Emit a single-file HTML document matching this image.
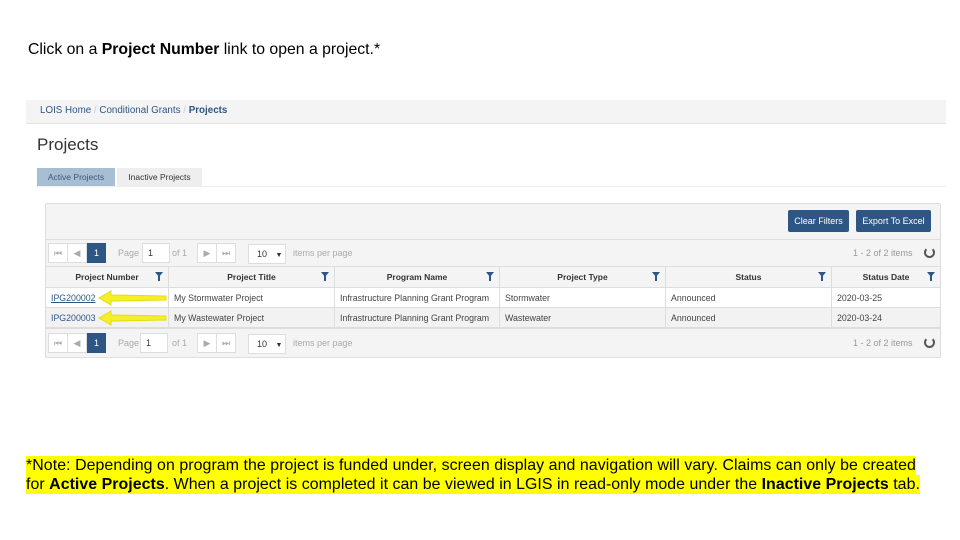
<!DOCTYPE html>
<html><head><meta charset="utf-8"><style>
*{margin:0;padding:0;box-sizing:border-box}
body{width:960px;height:540px;background:#fff;font-family:"Liberation Sans",Arial,sans-serif;position:relative;overflow:hidden}
.a{position:absolute}
.s{font-size:9px;color:#333}
.btn{background:#2d5685;color:#fff;font-size:9px;text-align:center;line-height:22px;border-radius:2px}
.pg{position:absolute;height:20px;border:1px solid #ddd;background:#fff;font-size:9px;color:#aaa;line-height:18px;text-align:center}
.cell{position:absolute;font-size:8.8px;color:#444;line-height:20px;padding-left:5px;border-right:1px solid #ddd;white-space:nowrap;overflow:hidden}
.hd{position:absolute;font-size:8.5px;font-weight:bold;color:#333;line-height:22px;text-align:center;border-right:1px solid #ddd}
.fl{position:absolute;right:5px;top:6px;width:0;height:0;border-left:4px solid transparent;border-right:4px solid transparent;border-top:5px solid #2d5685}
.fl:after{content:"";position:absolute;left:-1px;top:-1px;width:2px;height:5px;background:#2d5685}
.note{position:absolute;left:26px;font-size:16px;color:#000;background:#ffff00;line-height:19px;white-space:nowrap}
</style></head><body>
<div class="a" style="left:28px;top:41px;font-size:15.8px;color:#000">Click on a <b>Project Number</b> link to open a project.*</div>

<div class="a" style="left:26px;top:100px;width:920px;height:24px;background:#f4f4f4;border-bottom:1px solid #e4e4e4"></div>
<div class="a" style="left:40px;top:105px;font-size:9.8px;color:#2d5685">LOIS Home <span style="color:#ccc">/</span> Conditional Grants <span style="color:#ccc">/</span> <b>Projects</b></div>
<div class="a" style="left:37px;top:135px;font-size:17px;color:#333">Projects</div>
<div class="a" style="left:37px;top:168px;width:78px;height:18px;background:#a7bed3;font-size:8.5px;color:#3a5a7a;text-align:center;line-height:18px">Active Projects</div>
<div class="a" style="left:117px;top:168px;width:85px;height:18px;background:#eee;font-size:8.5px;color:#333;text-align:center;line-height:18px">Inactive Projects</div>
<div class="a" style="left:37px;top:186px;width:909px;height:1px;background:#eee"></div>

<div class="a" style="left:45px;top:203px;width:896px;height:155px;background:#f4f4f4;border:1px solid #ddd;border-radius:2px"></div>
<div class="a btn" style="left:788px;top:210px;width:61px">Clear Filters</div>
<div class="a btn" style="left:856px;top:210px;width:75px">Export To Excel</div>

<div class="a" style="left:45px;top:239px;width:896px;height:1px;background:#ddd"></div>
<div class="pg" style="left:48px;top:243px;width:20px">⏮</div>
<div class="pg" style="left:67px;top:243px;width:20px">◀</div>
<div class="pg" style="left:87px;top:243px;width:19px;background:#2d5685;color:#fff;border-color:#2d5685">1</div>
<div class="a s" style="left:118px;top:248px;color:#aaa">Page</div>
<div class="pg" style="left:142px;top:243px;width:28px;color:#333;text-align:left;padding-left:5px">1</div>
<div class="a s" style="left:172px;top:248px;color:#aaa">of 1</div>
<div class="pg" style="left:197px;top:243px;width:20px">▶</div>
<div class="pg" style="left:216px;top:243px;width:20px">⏭</div>
<div class="pg" style="left:248px;top:244px;width:38px;color:#333;text-align:left;padding-left:8px">10 <span style="font-size:7px;margin-left:6px">▼</span></div>
<div class="a s" style="left:293px;top:248px;color:#aaa">items per page</div>
<div class="a s" style="left:853px;top:248px;color:#999">1 - 2 of 2 items</div>
<div class="a" style="left:924px;top:247px;width:11px;height:11px;border:2px solid #555;border-radius:50%;border-top-color:transparent"></div>

<div class="a" style="left:46px;top:266px;width:894px;height:22px;background:#f4f4f4;border-top:1px solid #ddd;border-bottom:1px solid #ddd"></div>
<div class="hd" style="left:46px;top:266px;width:123px">Project Number<i class="fl"></i></div>
<div class="hd" style="left:169px;top:266px;width:166px">Project Title<i class="fl"></i></div>
<div class="hd" style="left:335px;top:266px;width:165px">Program Name<i class="fl"></i></div>
<div class="hd" style="left:500px;top:266px;width:166px">Project Type<i class="fl"></i></div>
<div class="hd" style="left:666px;top:266px;width:166px">Status<i class="fl"></i></div>
<div class="hd" style="left:832px;top:266px;width:108px;border-right:none">Status Date<i class="fl"></i></div>
<div class="a" style="left:46px;top:288px;width:894px;height:20px;background:#fff;border-bottom:1px solid #ddd"></div>
<div class="a" style="left:46px;top:308px;width:894px;height:21px;background:#f2f2f2;border-bottom:2px solid #ddd"></div>
<div class="cell" style="left:46px;top:288px;width:123px;color:#2d5685;text-decoration:underline">IPG200002</div>
<div class="cell" style="left:169px;top:288px;width:166px">My Stormwater Project</div>
<div class="cell" style="left:335px;top:288px;width:165px">Infrastructure Planning Grant Program</div>
<div class="cell" style="left:500px;top:288px;width:166px">Stormwater</div>
<div class="cell" style="left:666px;top:288px;width:166px">Announced</div>
<div class="cell" style="left:832px;top:288px;width:108px;border:none">2020-03-25</div>
<div class="cell" style="left:46px;top:308px;width:123px;color:#2d5685">IPG200003</div>
<div class="cell" style="left:169px;top:308px;width:166px">My Wastewater Project</div>
<div class="cell" style="left:335px;top:308px;width:165px">Infrastructure Planning Grant Program</div>
<div class="cell" style="left:500px;top:308px;width:166px">Wastewater</div>
<div class="cell" style="left:666px;top:308px;width:166px">Announced</div>
<div class="cell" style="left:832px;top:308px;width:108px;border:none">2020-03-24</div>
<svg class="a" style="left:96px;top:288px" width="74" height="40">
<g fill="#f5ee2a" stroke="#e5dc10" stroke-width="1">
<path d="M3 10 L15 3 L15 7 L70 8 L70 12 L15 13 L15 17 Z"/>
<path d="M3 30 L15 23 L15 27 L70 28 L70 32 L15 33 L15 37 Z"/>
</g></svg>
<div class="pg" style="left:48px;top:333px;width:20px">⏮</div>
<div class="pg" style="left:67px;top:333px;width:20px">◀</div>
<div class="pg" style="left:87px;top:333px;width:19px;background:#2d5685;color:#fff;border-color:#2d5685">1</div>
<div class="a s" style="left:118px;top:338px;color:#aaa">Page</div>
<div class="pg" style="left:140px;top:333px;width:28px;color:#333;text-align:left;padding-left:5px">1</div>
<div class="a s" style="left:172px;top:338px;color:#aaa">of 1</div>
<div class="pg" style="left:197px;top:333px;width:20px">▶</div>
<div class="pg" style="left:216px;top:333px;width:20px">⏭</div>
<div class="pg" style="left:248px;top:334px;width:38px;color:#333;text-align:left;padding-left:8px">10 <span style="font-size:7px;margin-left:6px">▼</span></div>
<div class="a s" style="left:293px;top:338px;color:#aaa">items per page</div>
<div class="a s" style="left:853px;top:338px;color:#999">1 - 2 of 2 items</div>
<div class="a" style="left:924px;top:337px;width:11px;height:11px;border:2px solid #555;border-radius:50%;border-top-color:transparent"></div>

<div class="note" style="top:456px;font-size:15.9px;letter-spacing:0.07px">*Note: Depending on program the project is funded under, screen display and navigation will vary. Claims can only be created</div>
<div class="note" style="top:475px;font-size:15.9px;letter-spacing:0.05px">for <b>Active Projects</b>. When a project is completed it can be viewed in LGIS in read-only mode under the <b>Inactive Projects</b> tab.</div>
</body></html>
